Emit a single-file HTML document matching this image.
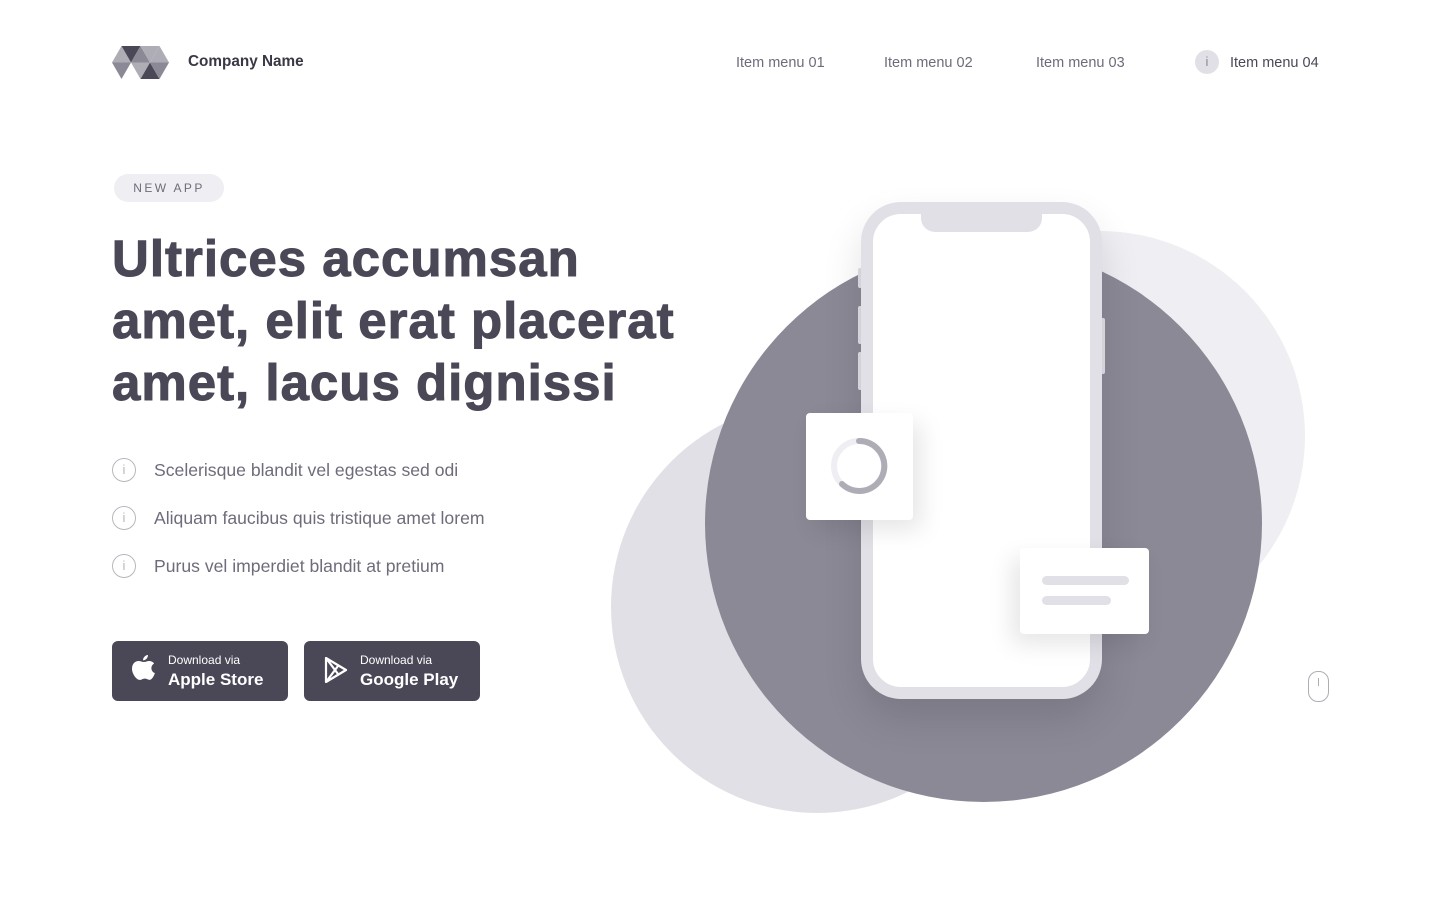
<!DOCTYPE html>
<html><head><meta charset="utf-8"><style>
*{margin:0;padding:0;box-sizing:border-box}
body{width:1440px;height:900px;background:#fff;position:relative;overflow:hidden;font-family:"Liberation Sans",sans-serif;color:#4a4857}
.a{position:absolute}
.nav{font-size:14.5px;color:#6e6c7a;top:55px}
h1{position:absolute;left:112px;top:228px;font-size:51px;line-height:62px;font-weight:bold;color:#4a4857;letter-spacing:1px;white-space:nowrap;-webkit-text-stroke:1px #4a4857}
.li{position:absolute;left:112px;font-size:17.6px;color:#6e6c7a}
.li i{position:absolute;left:0;top:-2px;width:24px;height:24px;border:1.3px solid #b8b7c0;border-radius:50%;font-style:normal;font-size:13px;text-align:center;line-height:21px;color:#b8b7c0}
.li span{position:absolute;left:42px;white-space:nowrap;top:0}
.btn{position:absolute;top:641px;width:176px;height:60px;background:#4a4857;border-radius:6px;color:#fff}
.btn .s{position:absolute;left:56px;top:12px;font-size:12px}
.btn .b{position:absolute;left:56px;top:29px;font-size:17px;font-weight:bold}
</style></head><body>
<svg class="a" style="left:112px;top:46px" width="57" height="33" viewBox="0 0 57 33">
<polygon points="0,16.5 9.5,0 19,16.5" fill="#aeadb6"/>
<polygon points="9.5,0 28.5,0 19,16.5" fill="#4a4857"/>
<polygon points="0,16.5 19,16.5 9.5,33" fill="#8b8996"/>
<polygon points="19,16.5 28.5,0 38,16.5" fill="#8b8996"/>
<polygon points="28.5,0 38,16.5 47.5,0" fill="#aeadb6"/>
<polygon points="38,16.5 47.5,0 57,16.5" fill="#aeadb6"/>
<polygon points="19,16.5 38,16.5 28.5,33" fill="#aeadb6"/>
<polygon points="28.5,33 38,16.5 47.5,33" fill="#4a4857"/>
<polygon points="38,16.5 57,16.5 47.5,33" fill="#8b8996"/>
</svg>
<div class="a" style="left:188px;top:53px;font-size:15.3px;font-weight:bold;color:#3a3845">Company Name</div>
<div class="a nav" style="left:736px">Item menu 01</div>
<div class="a nav" style="left:884px">Item menu 02</div>
<div class="a nav" style="left:1036px">Item menu 03</div>
<div class="a" style="left:1195px;top:50px;width:24px;height:24px;border-radius:50%;background:#e1e0e6;color:#8b8996;font-size:13px;text-align:center;line-height:24px">i</div>
<div class="a nav" style="left:1230px;color:#4a4857">Item menu 04</div>

<div class="a" style="left:114px;top:174px;width:110px;height:28px;border-radius:14px;background:#efeef3;font-size:12px;letter-spacing:2.4px;color:#6e6c7a;text-align:center;line-height:28px">NEW APP</div>
<h1>Ultrices accumsan<br>amet, elit erat placerat<br>amet, lacus dignissi</h1>
<div class="li" style="top:460px"><i>i</i><span>Scelerisque blandit vel egestas sed odi</span></div>
<div class="li" style="top:508px"><i>i</i><span>Aliquam faucibus quis tristique amet lorem</span></div>
<div class="li" style="top:556px"><i>i</i><span>Purus vel imperdiet blandit at pretium</span></div>

<div class="btn" style="left:112px">
<svg class="a" style="left:20px;top:14px" width="24" height="28" viewBox="0 0 24 28"><path d="M16 0c0 3-2.5 5.5-5 5.3C11 2.5 13.5 0 16 0zM12 7c2 0 3.5-1.2 5.5-1 2 .1 3.6 1 4.6 2.5-4 2.5-3.4 8 .8 9.6-1 3-3 6.5-5 6.7-2 .2-2.5-1.2-5-1.2s-3 1.3-5 1.3C4.5 25 0 19 0 13.5 0 8.5 3.5 6 6.5 6c2.2 0 3.5 1 5.5 1z" fill="#fff"/></svg>
<div class="s">Download via</div><div class="b">Apple Store</div></div>
<div class="btn" style="left:304px">
<svg class="a" style="left:20px;top:16px" width="24" height="26" viewBox="0 0 24 26"><path d="M2 1v24L22 13z M2 1l12 16 M2 25l12-16" fill="none" stroke="#fff" stroke-width="2.2" stroke-linejoin="round"/></svg>
<div class="s">Download via</div><div class="b">Google Play</div></div>

<div class="a" style="left:895px;top:231px;width:410px;height:410px;border-radius:50%;background:#efeef3"></div>
<div class="a" style="left:611px;top:401px;width:412px;height:412px;border-radius:50%;background:#e1e0e6"></div>
<div class="a" style="left:705px;top:245px;width:557px;height:557px;border-radius:50%;background:#8b8996"></div>

<div class="a" style="left:858px;top:268px;width:6px;height:20px;background:#e1e0e6;border-radius:2px"></div>
<div class="a" style="left:858px;top:306px;width:6px;height:38px;background:#e1e0e6;border-radius:2px"></div>
<div class="a" style="left:858px;top:352px;width:6px;height:38px;background:#e1e0e6;border-radius:2px"></div>
<div class="a" style="left:1099px;top:318px;width:6px;height:56px;background:#e1e0e6;border-radius:2px"></div>
<div class="a" style="left:861px;top:202px;width:241px;height:497px;border-radius:40px;background:#fff;border:12px solid #e1e0e6;box-shadow:0 20px 40px rgba(0,0,0,.12)"></div>
<div class="a" style="left:921px;top:212px;width:121px;height:20px;background:#e1e0e6;border-radius:0 0 14px 14px"></div>

<div class="a" style="left:806px;top:413px;width:107px;height:107px;background:#fff;border-radius:4px;box-shadow:8px 10px 24px rgba(0,0,0,.1)"></div>
<svg class="a" style="left:829px;top:436px" width="60" height="60" viewBox="0 0 60 60"><circle cx="30" cy="30" r="25" fill="none" stroke="#efeef3" stroke-width="6"/><path d="M30 5A25 25 0 1 1 13 48" fill="none" stroke="#aeadb6" stroke-width="6" stroke-linecap="round"/></svg>
<div class="a" style="left:1020px;top:548px;width:129px;height:86px;background:#fff;border-radius:4px;box-shadow:-8px 10px 24px rgba(0,0,0,.1)"></div>
<div class="a" style="left:1042px;top:576px;width:87px;height:9px;background:#e1e0e6;border-radius:5px"></div>
<div class="a" style="left:1042px;top:596px;width:69px;height:9px;background:#e1e0e6;border-radius:5px"></div>

<div class="a" style="left:1308px;top:671px;width:21px;height:31px;border:1.5px solid #aeadb6;border-radius:10px"></div>
<div class="a" style="left:1317.5px;top:678px;width:1.5px;height:8px;background:#aeadb6"></div>
</body></html>
